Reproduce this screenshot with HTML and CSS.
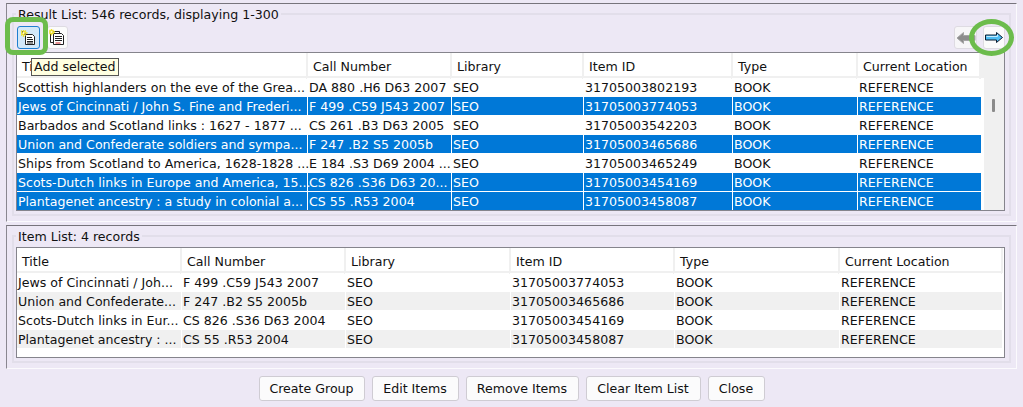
FILE: index.html
```html
<!DOCTYPE html>
<html lang="en">
<head>
<meta charset="utf-8">
<title>Result List</title>
<link rel="stylesheet" href="styles.css">
</head>
<body>
<div class="app">
  <section class="outer result-outer">
    <fieldset class="group result-group">
      <legend>Result List: 546 records, displaying 1-300</legend>
      <div class="toolbar">
        <div class="tools-left">
          <button class="tool active" type="button" aria-label="Add selected">
            <svg width="16" height="16" viewBox="0 0 16 16"><path d="M4.500 4.500h7l2 2v8h-9z" fill="#fff" stroke="#222"/><path d="M6 7.500h5M6 9.500h6M6 11.500h6M6 13h6" stroke="#222"/><path d="M2.500 -1v8M-1.500 3h8M0 .5l5 5M5 .5l-5 5" stroke="#efe02c" stroke-width="1.300"/><path d="M1 1.500h1v1H1zM3.500 3.500h1v1h-1z" fill="#333"/><circle cx="2.500" cy="3" r="1" fill="#fffbd0"/></svg>
          </button>
          <button class="tool second" type="button" aria-label="Add all">
            <svg width="17" height="17" viewBox="0 0 17 17"><path d="M1.500 2.500h9v11h-9z" fill="#fff" stroke="#222"/><path d="M4.500 4.500h8l2 2v9h-10z" fill="#fff" stroke="#222"/><path d="M6 7.500h7M6 9.500h7M6 11.500h7" stroke="#222"/><path d="M6.500 14h5" stroke="#c22"/><path d="M2.500 -.5v7M-1 3h7M.5 1l4 4M4.500 1l-4 4" stroke="#efe02c" stroke-width="1.300"/><circle cx="2.500" cy="3" r=".9" fill="#fffbd0"/></svg>
          </button>
        </div>
        <div class="tools-right">
          <button class="tool" type="button" aria-label="Previous">
            <svg width="20" height="12" viewBox="0 0 20 12"><path d="M7.500.5 1 6l6.500 5.500V8.500H19v-5H7.500z" fill="#8c8c8c" stroke="#a5a5a5"/></svg>
          </button>
          <button class="tool next" type="button" aria-label="Next">
            <svg width="18" height="11" viewBox="0 0 18 11"><path d="M11.500.5l6 5-6 5V8H.5V3h11z" fill="#4fbdf2" stroke="#0c1c30"/><path d="M1.500 4.500h11V2.500" fill="none" stroke="#c4ecff"/></svg>
          </button>
        </div>
      </div>
      <div class="table-wrap result-wrap">
        <div class="table-main">
          <div class="row head r-cols"><span>Title</span><span>Call Number</span><span>Library</span><span>Item ID</span><span>Type</span><span>Current Location</span></div>
          <div class="row r-cols"><span>Scottish highlanders on the eve of the Grea...</span><span>DA 880 .H6 D63 2007</span><span>SEO</span><span>31705003802193</span><span>BOOK</span><span>REFERENCE</span></div>
          <div class="row sel r-cols"><span>Jews of Cincinnati / John S. Fine and Frederi...</span><span>F 499 .C59 J543 2007</span><span>SEO</span><span>31705003774053</span><span>BOOK</span><span>REFERENCE</span></div>
          <div class="row r-cols"><span>Barbados and Scotland links : 1627 - 1877 ...</span><span>CS 261 .B3 D63 2005</span><span>SEO</span><span>31705003542203</span><span>BOOK</span><span>REFERENCE</span></div>
          <div class="row sel r-cols"><span>Union and Confederate soldiers and sympa...</span><span>F 247 .B2 S5 2005b</span><span>SEO</span><span>31705003465686</span><span>BOOK</span><span>REFERENCE</span></div>
          <div class="row r-cols"><span>Ships from Scotland to America, 1628-1828 ...</span><span>E 184 .S3 D69 2004 ...</span><span>SEO</span><span>31705003465249</span><span>BOOK</span><span>REFERENCE</span></div>
          <div class="row sel r-cols"><span>Scots-Dutch links in Europe and America, 15...</span><span>CS 826 .S36 D63 20...</span><span>SEO</span><span>31705003454169</span><span>BOOK</span><span>REFERENCE</span></div>
          <div class="row sel r-cols"><span>Plantagenet ancestry : a study in colonial a...</span><span>CS 55 .R53 2004</span><span>SEO</span><span>31705003458087</span><span>BOOK</span><span>REFERENCE</span></div>
        </div>
        <div class="scrollbar"><div class="thumb"></div></div>
        <div class="tooltip">Add selected</div>
      </div>
    </fieldset>
  </section>
  <section class="outer item-outer">
    <fieldset class="group item-group">
      <legend>Item List: 4 records</legend>
      <div class="table-wrap item-wrap">
        <div class="table-main">
          <div class="row head i-cols"><span>Title</span><span>Call Number</span><span>Library</span><span>Item ID</span><span>Type</span><span>Current Location</span></div>
          <div class="row i-cols"><span>Jews of Cincinnati / Joh...</span><span>F 499 .C59 J543 2007</span><span>SEO</span><span>31705003774053</span><span>BOOK</span><span>REFERENCE</span></div>
          <div class="row alt i-cols"><span>Union and Confederate...</span><span>F 247 .B2 S5 2005b</span><span>SEO</span><span>31705003465686</span><span>BOOK</span><span>REFERENCE</span></div>
          <div class="row i-cols"><span>Scots-Dutch links in Eur...</span><span>CS 826 .S36 D63 2004</span><span>SEO</span><span>31705003454169</span><span>BOOK</span><span>REFERENCE</span></div>
          <div class="row alt i-cols"><span>Plantagenet ancestry : ...</span><span>CS 55 .R53 2004</span><span>SEO</span><span>31705003458087</span><span>BOOK</span><span>REFERENCE</span></div>
        </div>
      </div>
    </fieldset>
  </section>
  <footer class="actions">
    <button class="btn" type="button">Create Group</button>
    <button class="btn" type="button">Edit Items</button>
    <button class="btn" type="button">Remove Items</button>
    <button class="btn" type="button">Clear Item List</button>
    <button class="btn" type="button">Close</button>
  </footer>
  <div class="ring ring-square"></div>
  <div class="ring ring-round"></div>
</div>
</body>
</html>
```
FILE: styles.css
```css
* { box-sizing: border-box; }
html, body { margin: 0; padding: 0; }
body {
  width: 1023px;
  height: 407px;
  overflow: hidden;
  background: #ede8f5;
  font-family: "DejaVu Sans", sans-serif;
  font-size: 12.6px;
  color: #111;
}
.app { position: relative; width: 1023px; height: 407px; padding: 3px 6px 0 6px; }
.outer {
  border: 1px solid #fbfafd;
  border-top-color: #77747c;
  border-left-color: #8a8790;
  padding: 2px 5px 0 5px;
}
.result-outer { height: 219px; }
.item-outer { height: 144px; margin-top: 3px; }
.group { margin: 0; padding: 0 0 0 2px; border: 2px solid #e2deea; min-width: 0; }
.result-group { height: 210px; }
.item-group { height: 135px; }
legend { padding: 2px 2px 0; line-height: 14px; }
.toolbar { display: flex; justify-content: space-between; height: 23px; margin: 4px 4px 3px 1px; }
.tools-left, .tools-right { display: flex; }
.tools-right { gap: 6px; }
.tool {
  width: 23px; height: 23px; padding: 0;
  display: flex; align-items: center; justify-content: center;
  background: #f7f6f8; border: 1px solid #dedbe2; border-radius: 3px;
}
.tool.active { background: #d3e8f8; border-color: #1f7fd0; }
.tool.second { width: 21px; margin-left: 7px; background: #fbfbfb; }
.tool.next { width: 22px; background: #fbfbfb; }
.table-wrap { position: relative; display: flex; width: 989px; border: 1px solid #85848c; }
.result-wrap { height: 159px; background: #f0f0f0; }
.item-wrap { height: 111px; margin-top: 3px; background: #fff; }
.result-wrap .table-main { width: 967px; height: 157px; overflow: hidden; }
.item-wrap .table-main { width: 986px; }
.scrollbar { flex: 1; position: relative; background: #f0f0f0; }
.thumb { position: absolute; left: 8px; top: 46px; width: 3px; height: 13px; background: #8b8b8b; border-radius: 1px; }
.row { display: grid; height: 19px; line-height: 18px; background: #fff; }
.r-cols { grid-template-columns: 291px 144px 132px 149px 125px 1fr; }
.i-cols { grid-template-columns: 165px 164px 165px 164px 165px 1fr; }
.row span { padding: 1px 0 0 1px; white-space: nowrap; border-right: 1px solid #fff; }
.row.sel { background: #0078d7; color: #fff; border-bottom: 1px solid #fff; border-right: 2px solid #fff; }
.row.alt { background: #f0f0f0; border-bottom: 1px solid #fff; }
.row.head { height: 25px; line-height: 24px; border-bottom: 2px solid #f0f0f0; }
.r-cols.head { margin-right: 3px; }
.row.head span { padding: 2px 0 0 5px; border-right: 2px solid #f0f0f0; }
.tooltip {
  position: absolute; left: 14px; top: 5px;
  width: 88px; height: 18px; padding: 0 2px; line-height: 16px;
  background: #ffffe1; border: 1px solid #555; color: #111;
  white-space: nowrap; overflow: hidden;
}
.actions { display: grid; grid-template-columns: 106px 87px 113px 115px 57px; justify-content: center; gap: 7px; padding-top: 7px; }
.btn {
  height: 25px; padding: 0;
  font: 12.6px "DejaVu Sans", sans-serif; color: #111;
  background: #fbfbfc; border: 1px solid #cfccd3; border-radius: 3px;
}
.ring { position: absolute; pointer-events: none; border: 5px solid #6cbc4c; }
.ring-square { left: 5px; top: 17px; width: 43px; height: 38px; border-radius: 8px; }
.ring-round { left: 969px; top: 19px; width: 45px; height: 37px; border-radius: 50%; }
```
